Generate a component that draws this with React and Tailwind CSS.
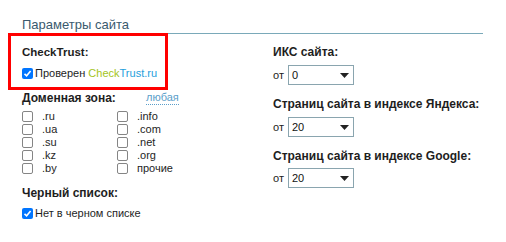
function Box({ checked }) {
  if (checked) {
    return (
      <span className="flex w-[11px] h-[11px] shrink-0 items-center justify-center rounded-[2px] bg-[#0075ff]">
        <svg width="9" height="9" viewBox="0 0 9 9">
          <path d="M1.5 4.8 L3.6 6.8 L7.6 2" fill="none" stroke="#fff" strokeWidth="1.6" />
        </svg>
      </span>
    );
  }
  return <span className="block w-[11px] h-[11px] shrink-0 rounded-[2px] border border-[#858585] bg-white" />;
}

function Select({ value }) {
  return (
    <div className="flex items-center gap-[4px]">
      <span className="text-[11px] text-[#222]">от</span>
      <div className="flex h-[20px] w-[66px] items-center justify-between border border-[#8aa5af] pl-[3px] pr-[4px] text-[11px] text-[#111]">
        <span>{value}</span>
        <svg width="9" height="5" viewBox="0 0 9 5">
          <path d="M0 0 H9 L4.5 5 Z" fill="#222" />
        </svg>
      </div>
    </div>
  );
}

const zones = [
  [".ru", ".info"],
  [".ua", ".com"],
  [".su", ".net"],
  [".kz", ".org"],
  [".by", "прочие"],
];

export default function App() {
  return (
    <div className="relative w-[506px] h-[242px] bg-white font-['Liberation_Sans',Arial,sans-serif] text-[#1e1e1e]">
      <div className="ml-[10px] w-[473px] border-b border-[#7aa9b9] pt-[16px]">
        <h2 className="pl-[12px] text-[13px] leading-[17px] text-[#3a5a6e]">Параметры сайта</h2>
      </div>

      <div className="flex pl-[22px]">
        <div className="w-[251px]">
          <p className="mt-[10px] text-[11.5px] font-bold leading-[16px]">CheckTrust:</p>
          <div className="mt-[5px] flex h-[16px] items-center gap-[2px] text-[11px]">
            <Box checked />
            <span>
              Проверен <span className="text-[#a3c41a]">Check</span>
              <span className="text-[#1fa0dc]">Trust.ru</span>
            </span>
          </div>

          <div className="mt-[9px] flex h-[16px] items-center">
            <span className="w-[124px] text-[12px] font-bold">Доменная зона:</span>
            <span className="border-b border-dotted border-[#5b9ec9] text-[11px] leading-[13px] text-[#5b9ec9]">любая</span>
          </div>

          <div className="mt-[4px]">
            {zones.map(([a, b]) => (
              <div key={a} className="flex h-[13px] items-center text-[11px]">
                <div className="flex w-[95px] items-center gap-[9px]">
                  <Box />
                  <span>{a}</span>
                </div>
                <div className="flex items-center gap-[9px]">
                  <Box />
                  <span>{b}</span>
                </div>
              </div>
            ))}
          </div>

          <p className="mt-[10px] text-[12px] font-bold leading-[16px]">Черный список:</p>
          <div className="mt-[4px] flex h-[16px] items-center gap-[2px] text-[11px]">
            <Box checked />
            <span>Нет в черном списке</span>
          </div>
        </div>

        <div>
          <p className="mt-[10px] text-[12px] font-bold leading-[16px]">ИКС сайта:</p>
          <div className="mt-[5px]">
            <Select value="0" />
          </div>
          <p className="mt-[11px] text-[12px] font-bold leading-[16px]">Страниц сайта в индексе Яндекса:</p>
          <div className="mt-[5px]">
            <Select value="20" />
          </div>
          <p className="mt-[11px] text-[12px] font-bold leading-[16px]">Страниц сайта в индексе Google:</p>
          <div className="mt-[4px]">
            <Select value="20" />
          </div>
        </div>
      </div>

      <div className="absolute left-[8px] top-[33px] h-[57px] w-[160px] border-[3px] border-[#ff0000]" />
    </div>
  );
}
